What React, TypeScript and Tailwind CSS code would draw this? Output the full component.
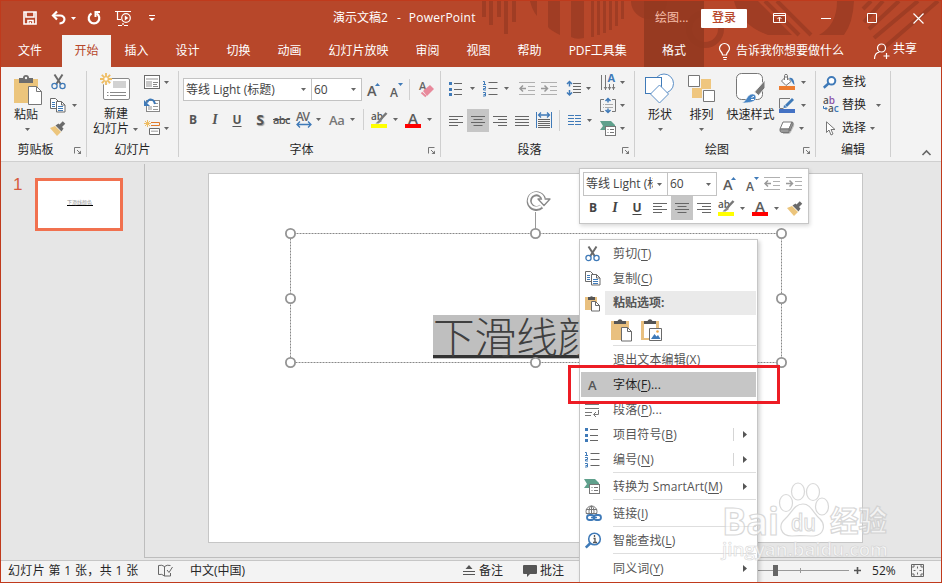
import type { ReactNode } from 'react';

interface IconProps {
  className?: string;
}

interface SvgProps extends IconProps {
  w: number;
  h: number;
  children: ReactNode;
}

function Svg({ w, h, className = '', children }: SvgProps) {
  return (
    <svg width={w} height={h} viewBox={`0 0 ${w} ${h}`} fill="none" className={`shrink-0 overflow-visible ${className}`}>
      {children}
    </svg>
  );
}

const GREY = '#6a6a6a';
const BLUE = '#3f7ab8';
const TAN = '#ecc57c';

/* ---------- small shared glyphs ---------- */

function Caret({ className = '' }: IconProps) {
  return (
    <Svg w={5} h={3} className={className}>
      <path d="M0 0h5L2.5 3z" fill="#666" />
    </Svg>
  );
}

function Divider({ className = '' }: IconProps) {
  return <div className={`h-[21px] w-px shrink-0 bg-[#d0d0d0] ${className}`} />;
}

function Launcher({ className = '' }: IconProps) {
  return (
    <Svg w={8} h={8} className={className}>
      <path d="M.5 6.500V.5h6M3 3l3 3" stroke="#777" />
      <path d="M7 3.500V7H3.500z" fill="#777" />
    </Svg>
  );
}

/* ---------- clipboard ---------- */

function PasteIcon() {
  return (
    <Svg w={28} h={30}>
      <path d="M0 4h24v24H0z" fill={TAN} />
      <path d="M5 3h4a3 3 0 016 0h4v5H5z" fill="#6d6d6d" />
      <circle cx="12" cy="3" r="1.200" fill="#f3f3f3" />
      <path d="M14.500 11.500h8l5 5v13h-13z" fill="#fff" stroke="#777" />
      <path d="M22.500 11.500v5h5" stroke="#777" />
    </Svg>
  );
}

function CutIcon({ className }: IconProps) {
  return (
    <Svg w={15} h={16} className={className}>
      <path d="M3.500 0.500l6.500 10M11.500 0.500L5 10.500" stroke={GREY} strokeWidth="2" />
      <circle cx="3.500" cy="12" r="2.600" stroke={BLUE} strokeWidth="1.300" />
      <circle cx="11.500" cy="12" r="2.600" stroke={BLUE} strokeWidth="1.300" />
    </Svg>
  );
}

function CopyIcon({ className }: IconProps) {
  return (
    <Svg w={16} h={15} className={className}>
      <path d="M.5.5h5l3 3v7h-8z" fill="#fff" stroke={GREY} />
      <path d="M2 4.500h3M2 6.500h3M2 8.500h3" stroke={BLUE} />
      <path d="M6.500 3.500h5l3.500 3.500v7h-8.500z" fill="#fff" stroke={GREY} />
      <path d="M11.500 3.500v3.500h3.500" stroke={GREY} />
      <path d="M8 8.500h5M8 10.500h5M8 12.500h5" stroke={BLUE} />
    </Svg>
  );
}

function BrushIcon({ className }: IconProps) {
  return (
    <Svg w={16} h={15} className={className}>
      <path d="M0 7l5-2 6 6-4 4z" fill={TAN} />
      <path d="M5.500 4.500l3-2 5 5-2 3z" fill={GREY} />
      <path d="M10 5.500L14 1.500" stroke={GREY} strokeWidth="3.500" />
    </Svg>
  );
}

/* ---------- slides ---------- */

function NewSlideIcon() {
  return (
    <Svg w={31} h={28}>
      <rect x="3.500" y="5.500" width="26" height="21" rx="1.500" fill="#fff" stroke="#888" />
      <path d="M13 8h13v7H13z" fill="#d2d2d2" />
      <path d="M7 19.500h1.500M10 19.500h16M7 22.500h1.500M10 22.500h16" stroke="#888" />
      <circle cx="6" cy="6" r="6" fill="#f3f3f3" />
      <path d="M6 0v12M0 6h12M1.800 1.800l8.400 8.400M10.200 1.800l-8.400 8.400" stroke="#efbd62" strokeWidth="1.800" />
      <circle cx="6" cy="6" r="2.200" fill="#fff" stroke="#efbd62" />
    </Svg>
  );
}

function LayoutIcon() {
  return (
    <Svg w={17} h={15}>
      <rect x=".5" y=".5" width="15" height="13" fill="#fff" stroke={GREY} />
      <path d="M2 3h12v2H2zM2 6h6v6H2z" fill="#c9c9c9" />
      <path d="M9 7.500h5M9 9.500h4M9 11.500h5" stroke="#888" />
    </Svg>
  );
}

function ResetIcon() {
  return (
    <Svg w={17} h={15}>
      <rect x="2.500" y="2.500" width="13" height="11" fill="#fff" stroke="#888" />
      <path d="M4 8h4v4H4z" fill="#c9c9c9" />
      <path d="M10 5.500h4M9 8.500h5M9 11.500h5" stroke="#999" />
      <path d="M11 6C10 .8 5 0 3 4.500" stroke={BLUE} strokeWidth="2" />
      <path d="M0 2v6h6z" fill={BLUE} />
    </Svg>
  );
}

function SectionIcon() {
  return (
    <Svg w={17} h={16}>
      <path d="M3.500 0v7M0 3.500h7M1 1l5 5M6 1L1 6" stroke="#efbd62" />
      <path d="M7 2.500h8.500v3H7" stroke="#e07b2c" />
      <path d="M5.500 8.500h10v6h-10z" fill="#fff" stroke={GREY} />
      <path d="M7 10.500h7v1.500H7z" fill="#bbb" />
    </Svg>
  );
}

/* ---------- text formatting ---------- */

function GrowFont({ className = '', small = false }: IconProps & { small?: boolean }) {
  return (
    <Svg w={14} h={16} className={className}>
      <text x="0" y={small ? 15 : 14} fontSize={small ? 12 : 14.500} fontWeight="600" fill="#5c5c5c">A</text>
      {small ? <path d="M8 1h5L10.500 4z" fill={BLUE} /> : <path d="M8 4h5L10.500 1z" fill={BLUE} />}
    </Svg>
  );
}

function EraserIcon({ className }: IconProps) {
  return (
    <Svg w={16} h={17} className={className}>
      <text x="0" y="9" fontSize="11" fontWeight="600" fill="#666">A</text>
      <path d="M4 10l7-6 4 4-7 7z" fill="#e8899b" />
      <path d="M2.500 11.500l4.500 4" stroke="#e8899b" strokeWidth="2" />
    </Svg>
  );
}

function Highlighter({ className }: IconProps) {
  return (
    <Svg w={17} h={16} className={className}>
      <text x="0" y="8" fontSize="10" fontWeight="600" fill="#555">ab</text>
      <path d="M15.500 1L9 8" stroke="#777" strokeWidth="2.500" />
      <path d="M4.500 11.500L9 7l2 2-3.500 2.500z" fill="#888" />
      <path d="M0 12h16v4H0z" fill="#ffff00" />
    </Svg>
  );
}

function FontColor({ className }: IconProps) {
  return (
    <Svg w={16} h={16} className={className}>
      <text x="8" y="11.500" fontSize="15" fontWeight="600" fill="#5c5c5c" textAnchor="middle">A</text>
      <path d="M0 12h16v4H0z" fill="#ff0000" />
    </Svg>
  );
}

function SpacingIcon({ className }: IconProps) {
  return (
    <Svg w={17} h={16} className={className}>
      <text x="0" y="9" fontSize="12" fontWeight="600" fill="#666" textLength="14">AV</text>
      <path d="M1 12.500h14M4 9.500l-3 3 3 3M12 9.500l3 3-3 3" stroke={BLUE} strokeWidth="1.300" />
    </Svg>
  );
}

const ALIGN_PATHS = {
  left: 'M0 .5h14M0 3.500h9M0 6.500h14M0 9.500h9',
  center: 'M0 .5h14M2.500 3.500h9M0 6.500h14M2.500 9.500h9',
  right: 'M0 .5h14M5 3.500h9M0 6.500h14M5 9.500h9',
  justify: 'M0 .5h14M0 3.500h14M0 6.500h14M0 9.500h14',
};

function AlignIcon({ kind, className }: IconProps & { kind: keyof typeof ALIGN_PATHS }) {
  return (
    <Svg w={14} h={10} className={className}>
      <path d={ALIGN_PATHS[kind]} stroke="#666" />
    </Svg>
  );
}

function BulletsIcon({ className }: IconProps) {
  return (
    <Svg w={14} h={16} className={className}>
      <path d="M5 2.500h8M5 8.500h8M5 13.500h8" stroke="#666" />
      <path d="M0 1h3v3H0zM0 7h3v3H0zM0 12h3v3H0z" fill={BLUE} />
    </Svg>
  );
}

function NumbersIcon({ className }: IconProps) {
  return (
    <Svg w={15} h={17} className={className}>
      <path d="M5.500 2.500h9M5.500 8.500h9M5.500 14.500h9" stroke="#666" />
      <path d="M0 1.500h1.500v3.500M0 4.500h3M0 6.500h2.500v2H.5v1.500h2.500M0 12.500h2.500v3.500H0M.5 14.500h2" stroke={BLUE} />
    </Svg>
  );
}

function IndentIcon({ out = false, className }: IconProps & { out?: boolean }) {
  return (
    <Svg w={16} h={14} className={className}>
      <path d="M0 .5h16M9 4.500h7M9 8.500h7M0 12.500h16" stroke="#b0b0b0" />
      <path d={out ? 'M1 6.500h6M4 3.500l-3 3 3 3' : 'M0 6.500h6M3.500 3.500l3 3-3 3'} stroke="#999" strokeWidth="1.500" />
    </Svg>
  );
}

function LineSpacingIcon({ className }: IconProps) {
  return (
    <Svg w={15} h={17} className={className}>
      <path d="M2.500 1.500v5M2.500 10v5M0 4l2.500-2.500L5 4M0 12.500L2.500 15 5 12.500" stroke={BLUE} strokeWidth="1.500" />
      <path d="M6 3.500h8M6 6.500h8M6 9.500h8M6 12.500h8" stroke="#666" />
    </Svg>
  );
}

function DistributeIcon({ className }: IconProps) {
  return (
    <Svg w={16} h={17} className={className}>
      <path d="M.5 0v16M15.500 0v16" stroke={BLUE} />
      <path d="M2.500 3h11M5 .5L2.500 3 5 5.500M11 .5L13.500 3 11 5.500" stroke={BLUE} strokeWidth="1.300" />
      <path d="M2 7.500h12M2 9.500h12M2 11.500h12M2 13.500h12M2 15.500h12" stroke="#666" />
    </Svg>
  );
}

function ColumnsIcon({ className }: IconProps) {
  return (
    <Svg w={14} h={11} className={className}>
      <path d="M0 .5h6M7 .5h6M0 3.500h6M7 3.500h6M0 6.500h6M7 6.500h6M0 9.500h6M7 9.500h6" stroke={BLUE} />
    </Svg>
  );
}

function TextDirectionIcon() {
  return (
    <Svg w={16} h={17}>
      <path d="M1.500 1v15M5.500 1v15M9.500 10v6M13.500 10v6" stroke="#777" />
      <path d="M4 13l1.500 2L7 13M8 13l1.500 2 1.500-2M12 13l1.500 2 1.500-2" stroke="#777" />
      <text x="7.500" y="8" fontSize="11" fontWeight="700" fill={BLUE}>A</text>
    </Svg>
  );
}

function AlignTextIcon() {
  return (
    <Svg w={17} h={17}>
      <path d="M4 2.500H.5v12H4M12 2.500h3.500v12H12" stroke="#777" />
      <path d="M3 7.500h1M5 7.500h8M3 10.500h1M5 10.500h8" stroke="#aaa" />
      <path d="M8 1.500v4M8 11.500v4M5.500 4L8 1.500 10.500 4M5.500 13L8 15.500l2.500-2.500" stroke={BLUE} strokeWidth="1.500" />
    </Svg>
  );
}

function SmartArtIcon({ className }: IconProps) {
  return (
    <Svg w={17} h={17} className={className}>
      <path d="M0 1h11l4 4v2H5v3H0l3-4z" fill="#5fa08c" />
      <rect x="5.500" y="6.500" width="10" height="9" fill="#fff" stroke="#777" />
      <path d="M7.500 9.500h1M10 9.500h4M7.500 12.500h1M10 12.500h4" stroke="#777" />
    </Svg>
  );
}

/* ---------- drawing ---------- */

function ShapesIcon() {
  return (
    <Svg w={30} h={31}>
      <circle cx="19" cy="10.500" r="9.500" fill="#fff" stroke="#5b8fc7" />
      <rect x=".5" y="4.500" width="16" height="16" fill="#fff" stroke={BLUE} />
      <path d="M14.500 12l9 9-9 9-9-9z" fill="#fff" stroke="#5b8fc7" />
    </Svg>
  );
}

function ArrangeIcon() {
  return (
    <Svg w={27} h={27}>
      <path d="M13 4h10v10H13zM4 13h10v10H4z" fill="#efc67e" />
      <path d="M.5.5h11v11H.5zM15.500 15.500h11v11h-11z" fill="#fff" stroke="#777" />
    </Svg>
  );
}

function QuickStyleIcon() {
  return (
    <Svg w={30} h={30}>
      <rect x=".5" y=".5" width="26" height="26" rx="5" fill="#fff" stroke="#777" />
      <path d="M29 7v8l-6.500 7.500-4-3.500z" fill="#777" stroke="#f3f3f3" />
      <path d="M6 30c5-2 5-9 10.500-9 4.500 0 5 7-1 8-3 .6-5 1-9.500 1z" fill="#4583c4" stroke="#f3f3f3" strokeWidth=".6" />
      <path d="M15.500 24.500l2.500-1.200M15 26.500h3" stroke="#fff" />
    </Svg>
  );
}

function FillIcon() {
  return (
    <Svg w={17} h={17}>
      <path d="M2.500 7L7 2.500l5 5L7 11.500z" fill="#fff" stroke="#777" />
      <path d="M5.500 6V1.500c0-1.500 3-1.500 3 0V6" stroke="#777" />
      <path d="M10 4c4-1 5 2 5.500 7-2-1-2-3-3-4z" fill={BLUE} />
      <path d="M0 12h16v4H0z" fill="#ed7d31" />
    </Svg>
  );
}

function OutlineIcon() {
  return (
    <Svg w={17} h={17}>
      <path d="M.5 11V1.500H11M.5 11.500h4" stroke="#777" />
      <path d="M14 2L7 9" stroke={BLUE} strokeWidth="2.800" />
      <path d="M5 8l3 2.500L4.500 11z" fill={BLUE} />
      <path d="M0 12h16v4H0z" fill="#4472c4" />
    </Svg>
  );
}

function EffectsIcon() {
  return (
    <Svg w={17} h={14}>
      <path d="M4 2h9q3 0 2 3l-3 6q-1 2-3 2H4z" fill="#bbb" />
      <path d="M1 8l3-7h9L10 8z" fill="#fff" stroke="#777" />
      <path d="M1 8h9v3.500H2.500Q.5 11 1 8zM10 8l3-7q1.500 0 1 2l-3 7z" fill="#999" stroke="#777" />
    </Svg>
  );
}

function SearchIcon() {
  return (
    <Svg w={14} h={13}>
      <circle cx="8.500" cy="4.800" r="3.800" stroke={BLUE} strokeWidth="2" fill="#fff" />
      <path d="M5.500 7.500L.8 11.700" stroke={BLUE} strokeWidth="2.500" />
    </Svg>
  );
}

function ReplaceIcon() {
  return (
    <Svg w={17} h={16}>
      <text x="0" y="7" fontSize="10" fontWeight="600" fill="#555">a<tspan fill="#8d53a8">b</tspan></text>
      <text x="5" y="15" fontSize="10" fontWeight="600" fill="#555">a<tspan fill={BLUE}>c</tspan></text>
      <path d="M.5 9v2.500H4M2.500 10L4 11.500 2.500 13" stroke={BLUE} />
    </Svg>
  );
}

function PointerIcon() {
  return (
    <Svg w={10} h={15}>
      <path d="M.5.800v10.700l2.500-2.500 2 5 2-1-2-4.500H9z" fill="#fff" stroke="#777" />
    </Svg>
  );
}

/* ---------- title bar ---------- */

function TitlePattern() {
  return (
    <svg width="472" height="66" viewBox="470 0 472 66" fill="none" className="absolute top-0 right-0">
      <g fill="#a03d24">
        <path d="M483 0h4v16h-4zM490 0h4v24h-4zM498 0h4v16h-4zM505 0h4v33h-4zM513 0h4v21h-4z" />
        <path d="M531 0h7v15q-5-6-7-15zM549 0h12v34q-10-5-12-8zM572 0h13v37q-8 2-13-1zM592 0h3v36h-3zM598 0h3v34h-3zM604 0h3v32h-3zM610 0h3v29h-3zM616 0h3v25h-3zM622 0h3v18h-3z" />
        <path d="M735 0h24l34 34h-24q-28-10-34-34zM838 0h17q-1 22-10 34h-25q18-10 18-34z" />
      </g>
      <circle cx="706" cy="28" r="16" stroke="#a03d24" strokeWidth="6" />
      <circle cx="650" cy="0" r="18" fill="#a03d24" />
      <path d="M766 0l34 34M778 0l34 34M872 0l-8 8M884 0l-19 21M900 0l-30 28M919 0l-44 37M939 0l-60 52" stroke="#a03d24" strokeWidth="4" />
    </svg>
  );
}

function TitleBar() {
  return (
    <div className="relative flex h-[34px] items-center">
      <Svg w={14} h={14} className="ml-[22px]">
        <path d="M1 1h12v12H1zM3 1v5h8V1M5 13V9.500h5V13" stroke="#fff" strokeWidth="1.600" />
        <path d="M6.500 11H8v2H6.500z" fill="#fff" />
      </Svg>
      <Svg w={16} h={14} className="ml-[14px]">
        <path d="M2 4.500h7c6 0 6 7.500-.5 8" stroke="#fff" strokeWidth="2.200" />
        <path d="M6 0.500l-4 4 4 4" stroke="#fff" strokeWidth="2.200" />
      </Svg>
      <Svg w={5} h={3} className="ml-1">
        <path d="M0 0h5L2.500 3z" fill="#fff" />
      </Svg>
      <Svg w={15} h={14} className="ml-[11px]">
        <path d="M4.500 2.500A5.300 5.300 0 109.500 2.500" stroke="#fff" strokeWidth="2.200" />
        <path d="M7.500 1H13M8.500 1v5" stroke="#fff" strokeWidth="2" />
      </Svg>
      <Svg w={17} h={16} className="ml-[13px]">
        <path d="M0 1.500h16M2.500 1.500v8H6M3 15.500h4M9 15.500h4M8 13v2" stroke="#fff" strokeWidth="1.200" />
        <circle cx="11" cy="8" r="4.300" stroke="#fff" strokeWidth="1.200" />
        <path d="M9.800 5.500l3.500 2.500-3.500 2.500z" fill="#fff" />
      </Svg>
      <Svg w={6} h={7} className="ml-[17px]">
        <path d="M0 .5h6" stroke="#fff" />
        <path d="M0 3h6L3 6z" fill="#fff" />
      </Svg>
      <div className="ml-[178px] flex w-[311px] text-white">
        <span>演示文稿2</span>
        <span className="ml-[9px]">-</span>
        <span className="ml-[8px] tracking-[0.25px]">PowerPoint</span>
      </div>
      <span className="ml-[11px] w-[46px] text-[#f5bda9]">绘图...</span>
      <button className="h-[19px] w-[46px] rounded-[1px] bg-white font-medium text-[#b7472a]">登录</button>
      <Svg w={14} h={11} className="ml-[26px]">
        <path d="M.5.5h12v9H.5zM.5 2.500h12M6.500 8.500V4.500M4.500 6l2-2 2 2" stroke="#fff" />
      </Svg>
      <Svg w={10} h={1} className="ml-[34px]">
        <path d="M0 .5h10" stroke="#fff" />
      </Svg>
      <Svg w={10} h={10} className="ml-9">
        <path d="M.5.5h9v9h-9z" stroke="#fff" />
      </Svg>
      <Svg w={11} h={11} className="ml-9">
        <path d="M.5.5l10 10M10.500.5l-10 10" stroke="#fff" strokeWidth="1.200" />
      </Svg>
    </div>
  );
}

const TABS = ['插入', '设计', '切换', '动画', '幻灯片放映', '审阅', '视图', '帮助', 'PDF工具集'];

function TabRow() {
  return (
    <div className="relative flex h-8 text-white">
      <div className="flex w-[61px] items-center pl-[17px]">文件</div>
      <div className="flex w-[49px] items-center justify-center bg-[#f3f3f3] text-[#b7472a]">开始</div>
      <div className="flex w-[533px]">
        {TABS.map((tab) => (
          <div key={tab} className="flex shrink-0 items-center px-[13.500px] whitespace-nowrap">
            {tab}
          </div>
        ))}
      </div>
      <div className="flex w-[60px] items-center justify-center">格式</div>
      <div className="ml-[15px] flex items-center">
        <Svg w={12} h={17}>
          <path d="M3.500 12c0-3-3-3.500-3-6.500a5 5 0 0110 0c0 3-3 3.500-3 6.500zM4 14.500h4M4.500 16.500h3" stroke="#fff" strokeWidth="1.200" />
        </Svg>
        <span className="ml-[5px] whitespace-nowrap">告诉我你想要做什么</span>
      </div>
      <div className="ml-[30px] flex items-center">
        <Svg w={16} h={17}>
          <circle cx="7.500" cy="5" r="4" stroke="#fff" strokeWidth="1.200" />
          <path d="M.5 16c0-4 2-6.500 5-7M12.500 10v6M9.500 13h6" stroke="#fff" strokeWidth="1.200" />
        </Svg>
        <span className="-mt-1 ml-[3px]">共享</span>
      </div>
    </div>
  );
}

/* ---------- ribbon ---------- */

interface GroupProps {
  width: string;
  label: string;
  launcher?: boolean;
  children: ReactNode;
}

function Group({ width, label, launcher = true, children }: GroupProps) {
  return (
    <div className={`mt-1 flex h-[86px] shrink-0 flex-col border-r border-[#cfcfcf] ${width}`}>
      <div className="flex h-[71px]">{children}</div>
      <div className="flex h-[17px] items-center">
        <span className="flex-1 pt-[2px] text-center">{label}</span>
        {launcher && <Launcher className="mt-1 mr-1 ml-1" />}
      </div>
    </div>
  );
}

function Combo({ value, width, height = 'h-[23px]' }: { value: string; width: string; height?: string }) {
  return (
    <div className={`-mr-px flex shrink-0 items-center border border-[#c3c3c3] bg-white pr-[5px] pl-[2px] ${height} ${width}`}>
      <span className="mr-1 flex-1 overflow-hidden whitespace-nowrap">{value}</span>
      <Caret />
    </div>
  );
}

function ClipboardGroup() {
  return (
    <Group width="w-[86px]" label="剪贴板">
      <div className="ml-[13px] flex w-7 flex-col pt-1">
        <PasteIcon />
        <span className="mt-[2px] h-4 leading-4">粘贴</span>
        <Caret className="mt-[5px] ml-[11px]" />
      </div>
      <div className="ml-2 flex flex-col">
        <div className="flex h-[22px] items-center pl-px"><CutIcon /></div>
        <div className="flex h-6 items-center"><CopyIcon /><Caret className="ml-[6px]" /></div>
        <div className="flex h-[22px] items-center"><BrushIcon /></div>
      </div>
    </Group>
  );
}

function SlidesGroup() {
  return (
    <Group width="w-[92px]" label="幻灯片" launcher={false}>
      <div className="ml-[6px] flex w-[46px] flex-col pt-[2px]">
        <div className="pl-[7px]"><NewSlideIcon /></div>
        <span className="mt-[5px] ml-[11px] h-4 leading-4">新建</span>
        <div className="-mt-px flex h-4 items-center whitespace-nowrap">幻灯片<Caret className="ml-1" /></div>
      </div>
      <div className="ml-[5px] flex flex-col">
        <div className="flex h-[22px] items-center"><LayoutIcon /><Caret className="ml-[3px]" /></div>
        <div className="flex h-6 items-center"><ResetIcon /></div>
        <div className="flex h-[22px] items-center"><SectionIcon /><Caret className="ml-[3px]" /></div>
      </div>
    </Group>
  );
}

function FontGroup() {
  return (
    <Group width="w-[262px]" label="字体">
      <div className="flex flex-col text-[#444]">
        <div className="mt-[7px] ml-1 flex h-[23px] items-center">
          <Combo value="等线 Light (标题)" width="w-[129px]" />
          <Combo value="60" width="w-[51px]" />
          <GrowFont className="ml-[6px]" />
          <GrowFont className="ml-[9px]" small />
          <Divider className="ml-[5px]" />
          <EraserIcon className="ml-[9px]" />
        </div>
        <div className="mt-[7px] flex h-[23px] items-center text-[#555]">
          <b className="ml-[7px] w-[14px] text-center">B</b>
          <i className="ml-2 w-[14px] text-center font-['Liberation_Serif'] text-[14px] font-bold">I</i>
          <b className="ml-2 w-[14px] text-center underline underline-offset-2">U</b>
          <b className="ml-[9px] w-[14px] text-center text-[14px] text-shadow-[1px_1px_1px_#999]">S</b>
          <span className="ml-[6px] w-[18px] text-[11px] font-semibold tracking-[-0.6px] line-through">abc</span>
          <SpacingIcon className="ml-[5px]" />
          <Caret className="ml-[3px]" />
          <span className="ml-2 w-[18px] text-[13px] font-semibold tracking-[-0.3px] text-[#777]">Aa</span>
          <Caret className="ml-[3px]" />
          <Divider className="ml-2" />
          <Highlighter className="ml-[7px]" />
          <Caret className="ml-[5px]" />
          <FontColor className="ml-[7px]" />
          <Caret className="ml-[6px]" />
        </div>
      </div>
    </Group>
  );
}

function ParagraphGroup() {
  return (
    <Group width="w-[194px]" label="段落">
      <div className="flex w-[151px] flex-col">
        <div className="mt-[6px] ml-[8px] flex h-[23px] items-center">
          <BulletsIcon />
          <Caret className="ml-[7px]" />
          <NumbersIcon className="ml-2" />
          <Caret className="ml-[6px]" />
          <IndentIcon out className="ml-[10px]" />
          <IndentIcon className="ml-[6px]" />
          <LineSpacingIcon className="ml-[10px]" />
          <Caret className="ml-1" />
        </div>
        <div className="mt-[9px] ml-[8px] flex h-[23px] items-center">
          <AlignIcon kind="left" />
          <div className="ml-1 flex h-[23px] w-[22px] items-center justify-center bg-[#c6c6c6]">
            <AlignIcon kind="center" />
          </div>
          <AlignIcon kind="right" className="ml-1" />
          <AlignIcon kind="justify" className="ml-2" />
          <DistributeIcon className="ml-[7px]" />
          <Divider className="ml-[7px]" />
          <ColumnsIcon className="ml-2" />
          <Caret className="ml-[5px]" />
        </div>
      </div>
      <div className="ml-[8px] flex flex-col">
        <div className="flex h-[22px] items-center"><TextDirectionIcon /><Caret className="ml-1" /></div>
        <div className="flex h-6 items-center"><AlignTextIcon /><Caret className="ml-[3px]" /></div>
        <div className="flex h-[22px] items-center"><SmartArtIcon /><Caret className="ml-[3px]" /></div>
      </div>
    </Group>
  );
}

interface BigButtonProps {
  icon: ReactNode;
  label: string;
  className: string;
}

function BigButton({ icon, label, className }: BigButtonProps) {
  return (
    <div className={`flex shrink-0 flex-col items-center ${className}`}>
      <div className="flex h-[34px] items-center">{icon}</div>
      <span className="mt-[2px] h-4 leading-4 whitespace-nowrap">{label}</span>
      <Caret className="mt-[5px]" />
    </div>
  );
}

function DrawingGroup() {
  return (
    <Group width="w-[181px]" label="绘图">
      <BigButton icon={<ShapesIcon />} label="形状" className="ml-[10px] w-[30px]" />
      <BigButton icon={<ArrangeIcon />} label="排列" className="ml-[13px] w-[27px]" />
      <BigButton icon={<QuickStyleIcon />} label="快速样式" className="ml-[11px] w-[49px]" />
      <div className="ml-[4px] flex flex-col">
        <div className="flex h-[22px] items-center"><FillIcon /><Caret className="ml-[5px]" /></div>
        <div className="flex h-6 items-center"><OutlineIcon /><Caret className="ml-[5px]" /></div>
        <div className="flex h-[22px] items-center"><EffectsIcon /><Caret className="ml-[3px]" /></div>
      </div>
    </Group>
  );
}

function EditingGroup() {
  return (
    <Group width="w-[75px]" label="编辑" launcher={false}>
      <div className="ml-[7px] flex flex-col">
        <div className="flex h-[22px] items-center"><SearchIcon /><span className="ml-[5px]">查找</span></div>
        <div className="flex h-6 items-center"><ReplaceIcon /><span className="ml-[2px]">替换</span><Caret className="ml-[10px]" /></div>
        <div className="flex h-[22px] items-center pl-[3px]"><PointerIcon /><span className="ml-[6px]">选择</span><Caret className="ml-1" /></div>
      </div>
    </Group>
  );
}

function Ribbon() {
  return (
    <div className="flex h-[95px] border-b border-[#cfcfcf] bg-[#f3f3f3]">
      <ClipboardGroup />
      <SlidesGroup />
      <FontGroup />
      <ParagraphGroup />
      <DrawingGroup />
      <EditingGroup />
      <div className="flex flex-1 items-end justify-end pr-[10px] pb-[5px]">
        <Svg w={9} h={6}>
          <path d="M.5 5L4.500 1l4 4" stroke="#666" strokeWidth="1.600" />
        </Svg>
      </div>
    </div>
  );
}

/* ---------- workspace ---------- */

const HANDLES: [number, number][] = [
  [6, 33], [251, 33], [497, 33],
  [6, 98], [497, 98],
  [6, 162], [251, 162], [497, 162],
];

function TitlePlaceholder() {
  return (
    <div className="absolute top-[26px] left-[75px] h-[170px] w-[504px]">
      <div className="absolute top-[115px] left-[149px] h-[44px] w-[208px] bg-[#bfbfbf] text-[41.600px] leading-[44px] font-light whitespace-nowrap text-[#404040]">
        <span className="block h-[43px] border-b-[3px] border-[#333]">下滑线颜色</span>
      </div>
      <Svg w={504} h={170} className="absolute top-0 left-0">
        <rect x="6.500" y="33.500" width="491" height="129" stroke="#888" strokeDasharray="2 1" />
        <path d="M251.500 12v17" stroke="#999" />
        {HANDLES.map(([x, y]) => (
          <circle key={`${x}-${y}`} cx={x + 0.5} cy={y + 0.5} r="4.600" fill="#fff" stroke="#949494" strokeWidth="1.800" />
        ))}
      </Svg>
      {/* rotate handle */}
      <Svg w={28} h={24} className="absolute -top-[11px] left-[240px]">
        <path d="M17.500 17.500A7.300 7.300 0 1119.500 10" stroke="#888" strokeWidth="5" />
        <path d="M14 10h12l-6 6.500z" fill="#fff" stroke="#888" strokeWidth="1.300" strokeLinejoin="round" />
        <path d="M17 17A7.300 7.300 0 1119.500 11" stroke="#fff" strokeWidth="2.400" />
      </Svg>
    </div>
  );
}

function Workspace() {
  return (
    <div className="flex h-[396px] bg-[#e6e6e6]">
      <div className="mt-[2px] flex w-[144px] border-r border-[#bdbdbd] pt-[14px]">
        <span className="ml-[12px] w-[22px] font-['Liberation_Sans'] text-[17px] leading-[14px] text-[#d65a3e]">1</span>
        <div className="h-[53px] w-[88px] border-[3px] border-[#f1714f] bg-white pt-[18px] pl-[29px]">
          <div className="h-[7px] w-[26px] border-b border-black text-[5px] leading-[6px] whitespace-nowrap text-[#999]">
            下滑线颜色
          </div>
        </div>
      </div>
      <div className="flex-1 border-b border-[#bdbdbd] pt-[11px] pl-[63px]">
        <div className="relative h-[370px] w-[655px] border border-[#c6c6c6] bg-white">
          <TitlePlaceholder />
        </div>
      </div>
    </div>
  );
}

function StatusBar() {
  return (
    <div className="mt-[2px] flex h-[22px] items-center border-t border-[#c6c6c6] bg-[#f3f3f3] pb-[2px]">
      <span className="ml-[7px] w-[150px] tracking-[0.35px] whitespace-nowrap">幻灯片 第 1 张，共 1 张</span>
      <Svg w={15} h={13}>
        <path d="M6.500 2.500Q4 .5.5 1.500v9q3.500-1 6 1.500V2.500Q9 .5 12.500 1.500M6.500 12h6V9M9 6l2 2.500L14.500 3" stroke="#666" />
      </Svg>
      <span className="ml-[17px] w-[273px]">中文(中国)</span>
      <Svg w={12} h={12}>
        <path d="M6 0l3.500 4h-7z" fill="#555" />
        <path d="M0 6.500h12M0 9.500h12" stroke="#555" />
      </Svg>
      <span className="ml-1 w-[44px]">备注</span>
      <Svg w={14} h={13}>
        <path d="M1 1h12q1 0 1 1v7q0 1-1 1H7l-3 3v-3H1q-1 0-1-1V2q0-1 1-1z" fill="#555" />
      </Svg>
      <span className="ml-[3px]">批注</span>
      <Svg w={100} h={13} className="ml-[186px]">
        <path d="M0 6.500h99M50.500 4v5" stroke="#999" />
        <path d="M23 1h5v11h-5z" fill="#666" />
      </Svg>
      <Svg w={9} h={9} className="ml-[3px]">
        <path d="M1 4.500h7M4.500 1v7" stroke="#555" strokeWidth="1.600" />
      </Svg>
      <span className="ml-[10px] w-[38px]">52%</span>
      <Svg w={14} h={14} className="ml-px">
        <path d="M.5.5h12v12H.5zM6.500 2.500v2M6.500 8.500v2M2.500 6.500h2M8.500 6.500h2" stroke="#666" />
        <path d="M2 4V2h2M9 2h2v2M11 9v2H9M4 11H2V9" stroke="#666" />
      </Svg>
    </div>
  );
}

/* ---------- floating parts ---------- */

function MiniToolbar() {
  return (
    <div className="absolute top-[168px] left-[579px] h-[56px] w-[230px] border border-[#c6c6c6] bg-white text-[#444] shadow-[1px_2px_4px_rgba(0,0,0,0.15)]">
      <div className="mt-[3px] ml-[3px] flex h-6 items-center">
        <Combo value="等线 Light (标" width="w-[85px]" height="h-6" />
        <Combo value="60" width="w-[50px]" height="h-6" />
        <GrowFont className="ml-[7px]" />
        <GrowFont className="ml-[9px]" small />
        <IndentIcon out className="ml-[4px]" />
        <IndentIcon className="ml-[6px]" />
      </div>
      <div className="flex h-6 items-center text-[#444]">
        <b className="ml-[6px] w-[14px] text-center">B</b>
        <i className="ml-2 w-[14px] text-center font-['Liberation_Serif'] text-[14px] font-bold">I</i>
        <b className="ml-2 w-[14px] text-center underline underline-offset-2">U</b>
        <AlignIcon kind="left" className="ml-[9px]" />
        <div className="ml-1 flex h-6 w-[22px] items-center justify-center bg-[#c6c6c6]">
          <AlignIcon kind="center" />
        </div>
        <AlignIcon kind="right" className="ml-1" />
        <Highlighter className="ml-[7px]" />
        <Caret className="ml-[5px]" />
        <FontColor className="ml-[7px]" />
        <Caret className="ml-[6px]" />
        <BrushIcon className="ml-2" />
      </div>
    </div>
  );
}

function SmallPasteIcon() {
  return (
    <Svg w={16} h={17}>
      <path d="M0 2h12v13H0z" fill="#e9c07f" />
      <path d="M3 2h2a2 2 0 013 0h2v3H3z" fill="#555" />
      <path d="M6.500 6.500h4l4 4v5.500h-8z" fill="#fff" stroke={GREY} />
      <path d="M10.500 6.500v4h4" stroke={GREY} />
    </Svg>
  );
}

function PasteOption({ picture = false }: { picture?: boolean }) {
  return (
    <Svg w={22} h={24}>
      <path d="M0 3h18v19H0z" fill="#e9c07f" />
      {picture && <path d="M3 6h12v14H3z" fill="#fff" />}
      <path d="M3 3h3.500a2.700 2.700 0 015 0H15v3H3z" fill="#555" />
      {picture ? (
        <>
          <path d="M8.500 10.500h12v12h-12z" fill="#fff" stroke={GREY} />
          <path d="M10 21l3.500-5 2 2.500 1.500-1.500 2.500 4z" fill={BLUE} />
          <circle cx="16.500" cy="13.500" r="1.300" fill="#e9a54c" />
        </>
      ) : (
        <>
          <path d="M10.500 9.500h6l4 4v9.500h-10z" fill="#fff" stroke={GREY} />
          <path d="M16.500 9.500v4h4" stroke={GREY} />
        </>
      )}
    </Svg>
  );
}

function ParagraphIcon() {
  return (
    <Svg w={14} h={14}>
      <path d="M0 1.500h14M0 5.500h14M0 9.500h7M0 12.500h6M13.500 7v4.500H9M11 9l-2.500 2.500L11 14" stroke="#777" />
    </Svg>
  );
}

function LinkIcon() {
  return (
    <Svg w={17} h={17}>
      <circle cx="6.500" cy="6.500" r="5.500" stroke="#777" />
      <path d="M1 4.500h11M1 8.500h11M6.500 1v11" stroke="#777" />
      <ellipse cx="6.500" cy="6.500" rx="2.500" ry="5.500" stroke="#777" />
      <path d="M1 9h16v8H1z" fill="#fff" />
      <rect x="2" y="10" width="7" height="5" rx="2.500" stroke={BLUE} strokeWidth="1.800" />
      <rect x="9" y="10" width="7" height="5" rx="2.500" stroke={BLUE} strokeWidth="1.800" />
      <path d="M6 12.500h6" stroke={BLUE} strokeWidth="1.500" />
    </Svg>
  );
}

function SmartLookupIcon() {
  return (
    <Svg w={17} h={17}>
      <circle cx="9.500" cy="7" r="5.800" stroke={BLUE} strokeWidth="1.600" fill="#fff" />
      <path d="M5.500 11L.8 15.700" stroke={BLUE} strokeWidth="2.500" />
      <path d="M9.500 3v2M8.500 6.500h1.500v4M8 10.500h4" stroke="#555" strokeWidth="1.300" />
    </Svg>
  );
}

interface MenuItemProps {
  icon?: ReactNode;
  label: string;
  hotkey: string;
  tail?: string;
  submenu?: boolean;
  split?: boolean;
  active?: boolean;
}

function MenuItem({ icon, label, hotkey, tail = '', submenu, split, active }: MenuItemProps) {
  return (
    <div className={`mx-px flex h-[25px] shrink-0 items-center ${active ? 'bg-[#c6c6c6] text-[#222]' : ''}`}>
      <div className="flex w-[32px] items-center pl-1">{icon}</div>
      <span className="flex-1 tracking-[0.15px] whitespace-nowrap">
        {label}(<u className="underline-offset-2">{hotkey}</u>){tail}
      </span>
      {split && <div className="mr-[9px] h-[13px] w-px bg-[#d5d5d5]" />}
      {submenu && (
        <Svg w={4} h={7} className="mr-[9px]">
          <path d="M0 0l4 3.500L0 7z" fill="#555" />
        </Svg>
      )}
    </div>
  );
}

function MenuLine() {
  return <div className="mr-px ml-[33px] h-px shrink-0 bg-[#dedede]" />;
}

function ContextMenu() {
  return (
    <div className="absolute top-[239px] left-[579px] flex h-[344px] w-[179px] flex-col overflow-hidden border border-b-0 border-[#c6c6c6] bg-white pt-px text-[#555] shadow-[2px_2px_4px_rgba(0,0,0,0.18)]">
      <MenuItem icon={<CutIcon />} label="剪切" hotkey="T" />
      <MenuItem icon={<CopyIcon />} label="复制" hotkey="C" />
      <div className="flex h-6 shrink-0 items-center">
        <div className="w-[25px] pl-[5px]"><SmallPasteIcon /></div>
        <div className="mr-px flex h-6 flex-1 items-center bg-[#eaeaea] pl-2 font-bold">粘贴选项:</div>
      </div>
      <div className="flex h-[30px] shrink-0 items-center gap-2 pl-[31px]">
        <PasteOption />
        <PasteOption picture />
      </div>
      <MenuLine />
      <div className="pt-px"><MenuItem label="退出文本编辑" hotkey="X" /></div>
      <MenuItem icon={<span className="pl-[3px] text-[13px] font-semibold text-[#555]">A</span>} label="字体" hotkey="F" tail="..." active />
      <MenuItem icon={<ParagraphIcon />} label="段落" hotkey="P" tail="..." />
      <MenuItem icon={<BulletsIcon />} label="项目符号" hotkey="B" submenu split />
      <MenuItem icon={<NumbersIcon />} label="编号" hotkey="N" submenu split />
      <MenuLine />
      <div className="pt-px"><MenuItem icon={<SmartArtIcon className="-ml-px" />} label="转换为 SmartArt" hotkey="M" submenu /></div>
      <MenuLine />
      <div className="pt-px"><MenuItem icon={<LinkIcon />} label="链接" hotkey="I" /></div>
      <MenuLine />
      <div className="pt-px"><MenuItem icon={<SmartLookupIcon />} label="智能查找" hotkey="L" /></div>
      <MenuLine />
      <div className="pt-[2px]"><MenuItem label="同义词" hotkey="Y" submenu /></div>
    </div>
  );
}

function Watermark() {
  return (
    <svg width="180" height="90" viewBox="0 0 180 90" className="absolute top-[478px] left-[716px] opacity-80">
      <g fill="#fff" fillOpacity="0.7" stroke="#cfcfcf" strokeWidth="1.200">
        <ellipse cx="70" cy="25" rx="6.500" ry="8.500" />
        <ellipse cx="82" cy="13.500" rx="6.500" ry="8.500" />
        <ellipse cx="97" cy="14" rx="6.500" ry="8.500" />
        <ellipse cx="106" cy="28.500" rx="6.500" ry="8.500" />
        <path d="M87 26c8 0 10 9 17 15 6 6 4 16-6 17-8 0-14-1-22 0-12 0-14-11-7-17s9-15 18-15z" />
        <text x="6" y="57" fontSize="38" fontWeight="700" textLength="57" lengthAdjust="spacingAndGlyphs">Bai</text>
        <text x="75" y="53" fontSize="23" fontWeight="600" textLength="25" lengthAdjust="spacingAndGlyphs">du</text>
        <text x="114" y="54" fontSize="29" fontWeight="700" textLength="57" lengthAdjust="spacingAndGlyphs">经验</text>
        <text x="6" y="78" fontSize="18" fontWeight="600" strokeWidth="0.600" fillOpacity="0.9" textLength="166" lengthAdjust="spacingAndGlyphs">jingyan.baidu.com</text>
      </g>
    </svg>
  );
}

export default function App() {
  return (
    <div className="relative h-[583px] w-[942px] overflow-hidden border border-[#c03a1c] bg-[#e6e6e6] font-['Open_Sans','Noto_Sans_CJK_SC',sans-serif] text-[12px] leading-4 text-[#262626]">
      <div className="relative bg-[#b7472a]">
        <TitlePattern />
        <div className="absolute top-0 left-[643px] h-[66px] w-[60px] bg-[#943820]/90" />
        <TitleBar />
        <TabRow />
      </div>
      <Ribbon />
      <Workspace />
      <StatusBar />

      <div className="absolute -top-px -left-px">
        <MiniToolbar />
        <ContextMenu />
        <div className="absolute top-[365px] left-[568px] h-[39px] w-[212px] border-[3px] border-[#ed1c24]" />
        <Watermark />
      </div>
    </div>
  );
}
